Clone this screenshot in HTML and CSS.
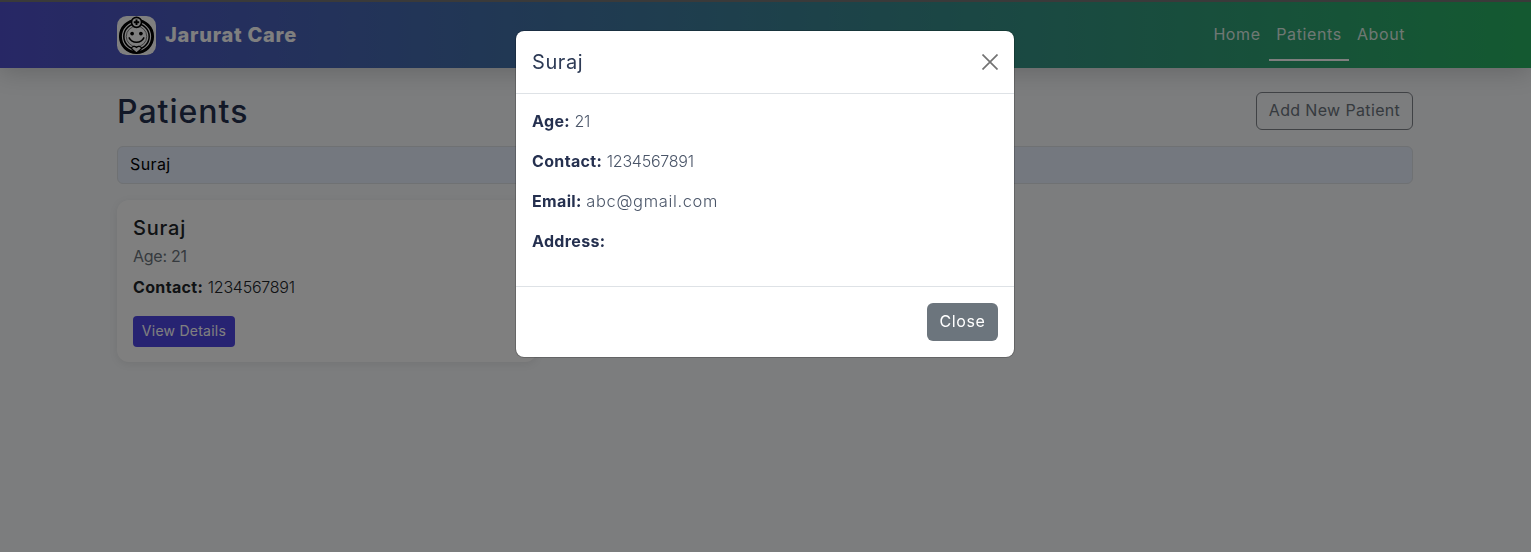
FILE: index.html
```html
<!DOCTYPE html>
<html lang="en">
<head>
<meta charset="utf-8">
<title>Jarurat Care</title>
<link rel="stylesheet" href="styles.css">
</head>
<body>
<nav class="navbar">
  <div class="container nav-inner">
    <a class="brand" href="#">
      <svg class="logo" viewBox="0 0 40 40" aria-hidden="true">
        <rect width="40" height="40" rx="10" fill="#fff"/>
        <circle cx="20" cy="21" r="16.500" fill="none" stroke="#000" stroke-width="3"/>
        <circle cx="20" cy="21" r="13" fill="none" stroke="#000" stroke-width="1.600"/>
        <circle cx="20" cy="21" r="10.500" fill="#fff" stroke="#555" stroke-width=".8"/>
        <circle cx="20" cy="6.500" r="5.200" fill="#fff" stroke="#000" stroke-width="1.800"/>
        <path d="M20 3.700v5.600M17.200 6.500h5.600" stroke="#000" stroke-width="2"/>
        <circle cx="15.500" cy="18" r="1.900" fill="#000"/>
        <circle cx="24.500" cy="18" r="1.900" fill="#000"/>
        <path d="M12.500 22.500c3 6 12 6 15 0" fill="none" stroke="#000" stroke-width="1.600" stroke-linecap="round"/>
        <path d="M20 38l-4.500-3.800c-1.700-2.200 1.700-4.400 4.500-2 2.800-2.400 6.200-.2 4.500 2z" fill="#fff" stroke="#000" stroke-width="1.300"/>
      </svg>
      <span class="brand-name">Jarurat Care</span>
    </a>
    <ul class="nav-links">
      <li><a class="nav-link" href="#">Home</a></li>
      <li><a class="nav-link active" href="#">Patients</a></li>
      <li><a class="nav-link" href="#">About</a></li>
    </ul>
  </div>
</nav>
<main class="container">
  <div class="page-head">
    <h1 class="page-title">Patients</h1>
    <button class="btn-outline" type="button">Add New Patient</button>
  </div>
  <input class="search" type="text" value="Suraj" aria-label="Search patients">
  <div class="patient-grid">
    <article class="card">
      <h2 class="card-title">Suraj</h2>
      <p class="card-age">Age: 21</p>
      <p class="card-contact"><strong>Contact:</strong> <span class="digits">1234567891</span></p>
      <button class="btn-details" type="button">View Details</button>
    </article>
  </div>
</main>
<div class="backdrop">
  <div class="modal">
    <header class="modal-header">
      <h3 class="modal-title">Suraj</h3>
      <button class="modal-close" type="button" aria-label="Close">
        <svg viewBox="0 0 16 16" aria-hidden="true"><path d="M.5.500l15 15M15.500.500l-15 15" stroke="#737373" stroke-width="1.700" fill="none"/></svg>
      </button>
    </header>
    <div class="modal-body">
      <p><strong>Age:</strong> <span class="digits">21</span></p>
      <p><strong>Contact:</strong> <span class="digits">1234567891</span></p>
      <p><strong>Email:</strong> <span class="email">abc@gmail.com</span></p>
      <p><strong>Address:</strong></p>
    </div>
    <footer class="modal-footer">
      <button class="btn-close" type="button">Close</button>
    </footer>
  </div>
</div>
</body>
</html>
```
FILE: styles.css
```css
* { box-sizing: border-box; }
html, body { height: 100%; }
body {
  margin: 0;
  background: #f8fafc;
  color: #1e293b;
  font-family: "Inter", "Liberation Sans", sans-serif;
  font-size: 16px;
  line-height: 24px;
  overflow: hidden;
}
.container { width: 1296px; margin: 0 118px 0 117px; }
.navbar {
  height: 68px;
  border-top: 2px solid #747474;
  background: linear-gradient(90deg, #4f4fcb, #28b362);
  box-shadow: 0 4px 24px rgba(0,0,0,.18);
}
.nav-inner { display: flex; align-items: center; justify-content: space-between; height: 66px; }
.brand { display: flex; align-items: center; gap: 9px; color: #fff; text-decoration: none; }
.logo { width: 39px; height: 39px; display: block; }
.brand-name { font-size: 20px; font-weight: 800; letter-spacing: .75px; }
.nav-links { display: grid; grid-template-columns: 64px 80px 64px; list-style: none; margin: 0; padding: 0; }
.nav-link { display: block; position: relative; height: 52px; line-height: 50px; text-align: center; letter-spacing: .6px; color: rgba(255,255,255,.85); text-decoration: none; }
.nav-link.active::after { content: ""; position: absolute; left: 0; right: 0; bottom: 0; height: 2px; background: #fff; }
.page-head { display: flex; justify-content: space-between; align-items: center; margin-top: 24px; }
.page-title { margin: 0; font-size: 32px; font-weight: 500; line-height: 38px; padding-top: 1px; height: 38px; letter-spacing: 1px; color: #25304f; }
.btn-outline { height: 38px; width: 157px; padding: 0 0 2px; background: transparent; border: 1px solid #80848a; border-radius: 6px; font: inherit; letter-spacing: .35px; color: #6c757d; }
.search { display: block; width: 100%; height: 38px; margin-top: 16px; padding: 5px 12px 7px; border: 1px solid #dee2e6; border-radius: 6px; background: #e8f0fe; font: inherit; letter-spacing: .4px; color: #000; }
.patient-grid { margin-top: 16px; }
.card { width: 420px; height: 162px; padding: 16px; background: #fff; border-radius: 12px; box-shadow: 0 2px 8px rgba(0,0,0,.08); }
.card-title { margin: 0; font-size: 20px; font-weight: 500; line-height: 24px; letter-spacing: .8px; color: #212529; }
.card-age { margin: 4px 0 0; letter-spacing: -.25px; color: #6c757d; }
.card-contact { margin: 7px 0 0; color: #212529; }
.card-contact strong { font-weight: 700; letter-spacing: .35px; }
.btn-details { display: block; width: 102px; height: 31px; margin-top: 17px; padding: 0 0 2px; background: #4f46e5; color: #fff; border: 0; border-radius: 4px; font: inherit; font-size: 14px; letter-spacing: .25px; }
.digits { font-weight: 300; letter-spacing: -.25px; }
.backdrop { position: fixed; inset: 0; background: rgba(0,0,0,.5); display: flex; justify-content: center; align-items: flex-start; padding-top: 30px; }
.modal { width: 500px; height: 328px; margin-right: 1px; background: #fff; background-clip: padding-box; border: 1px solid rgba(0,0,0,.2); border-radius: 9px; display: flex; flex-direction: column; }
.modal-header { display: flex; justify-content: space-between; align-items: center; height: 63px; padding: 0 16px; border-bottom: 1px solid #dee2e6; }
.modal-title { margin: 0; font-size: 20px; font-weight: 400; letter-spacing: .6px; color: #2d3a55; }
.modal-close { width: 16px; height: 16px; padding: 0; border: 0; background: none; }
.modal-close svg { display: block; }
.modal-body { flex: 1; padding: 15px 16px 0; color: #4a5568; }
.modal-body p { margin: 0 0 16px; }
.modal-body strong { color: #25304f; font-weight: 700; letter-spacing: .35px; }
.email { font-size: 16.5px; font-weight: 300; letter-spacing: .65px; }
.modal-footer { display: flex; justify-content: flex-end; align-items: center; height: 71px; padding: 0 16px; border-top: 1px solid #dee2e6; }
.btn-close { width: 71px; height: 38px; padding: 0 0 2px; background: #6c757d; color: #fff; border: 0; border-radius: 6px; font: inherit; letter-spacing: .6px; }
```
